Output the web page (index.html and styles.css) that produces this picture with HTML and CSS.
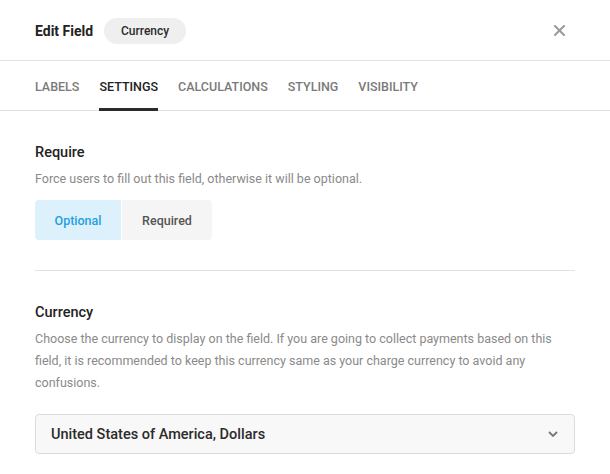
FILE: index.html
```html
<!DOCTYPE html>
<html>
<head>
<meta charset="utf-8">
<link rel="stylesheet" href="styles.css">
</head>
<body>
<div class="panel">
  <header class="header">
    <div class="title-group">
      <h1 class="title">Edit Field</h1>
      <span class="pill">Currency</span>
    </div>
    <button class="close" aria-label="Close">
      <svg width="11" height="11" viewBox="0 0 11 11"><path d="M1 1L10 10M10 1L1 10" stroke="#9a9a9a" stroke-width="2" stroke-linecap="square"/></svg>
    </button>
  </header>
  <nav class="tabs">
    <span class="tab">LABELS</span>
    <span class="tab active">SETTINGS</span>
    <span class="tab">CALCULATIONS</span>
    <span class="tab">STYLING</span>
    <span class="tab">VISIBILITY</span>
  </nav>
  <main class="content">
    <section class="section">
      <h2 class="section-title">Require</h2>
      <p class="desc">Force users to fill out this field, otherwise it will be optional.</p>
      <div class="toggle">
        <span class="toggle-opt selected">Optional</span>
        <span class="toggle-opt">Required</span>
      </div>
    </section>
    <hr class="divider">
    <section class="section">
      <h2 class="section-title">Currency</h2>
      <p class="desc">Choose the currency to display on the field. If you are going to collect payments based on this field, it is recommended to keep this currency same as your charge currency to avoid any confusions.</p>
      <div class="select">
        <span class="select-value">United States of America, Dollars</span>
        <svg class="chev" width="10" height="6" viewBox="0 0 10 6"><path d="M1 1L5 5L9 1" fill="none" stroke="#777" stroke-width="1.8"/></svg>
      </div>
    </section>
  </main>
</div>
</body>
</html>
```
FILE: styles.css
```css
* { box-sizing: border-box; }
html, body {
  margin: 0;
  padding: 0;
  background: #fff;
  font-family: Roboto, "Liberation Sans", sans-serif;
  color: #2b2b2b;
}
.panel { width: 610px; }
.header {
  height: 61px;
  padding: 0 35px;
  display: flex;
  align-items: center;
  justify-content: space-between;
  border-bottom: 1px solid #e2e2e2;
}
.title-group { display: flex; align-items: center; gap: 11px; padding-top: 1px; }
.title {
  margin: 0;
  font-size: 14px;
  font-weight: 700;
  color: #222;
}
.pill {
  display: inline-flex;
  align-items: center;
  justify-content: center;
  width: 82px;
  height: 26px;
  border-radius: 13px;
  background: #efefef;
  font-size: 12px;
  font-weight: 500;
  color: #2b2b2b;
}
.close {
  border: 0;
  background: none;
  padding: 0;
  margin-right: 10px;
  display: flex;
  cursor: pointer;
}
.tabs {
  height: 50px;
  padding: 0 35px;
  display: flex;
  gap: 20px;
  border-bottom: 1px solid #e2e2e2;
}
.tab {
  position: relative;
  display: flex;
  align-items: center;
  padding-top: 1px;
  font-size: 12.5px;
  font-weight: 500;
  color: #7a7a7a;
}
.tab.active { color: #222; }
.tab.active::after {
  content: "";
  position: absolute;
  left: 0;
  right: 0;
  bottom: -1px;
  height: 3px;
  background: #2b2b2b;
}
.content { padding: 31px 35px 0; }
.section-title {
  margin: 0;
  padding-top: 1px;
  font-size: 14.5px;
  line-height: 20px;
  font-weight: 500;
  color: #222;
}
.desc {
  margin: 5px 0 0;
  font-size: 12.5px;
  line-height: 22px;
  color: #8a8a8a;
}
.toggle {
  margin-top: 10px;
  display: flex;
  gap: 1px;
}
.toggle-opt {
  height: 40px;
  display: flex;
  align-items: center;
  justify-content: center;
  font-size: 12.5px;
  font-weight: 500;
  background: #f5f5f5;
  color: #555;
  width: 90px;
  border-radius: 0 4px 4px 0;
}
.toggle-opt.selected {
  width: 86px;
  background: #dcf1fc;
  color: #1fa0e0;
  border-radius: 4px 0 0 4px;
}
.divider {
  margin: 30px 0 0;
  border: 0;
  border-top: 1px solid #e2e2e2;
}
.divider + .section { padding-top: 31px; }
.select {
  margin-top: 20px;
  height: 40px;
  display: flex;
  align-items: center;
  justify-content: space-between;
  padding: 0 16px 0 15px;
  background: #f8f8f8;
  border: 1px solid #dcdcdc;
  border-radius: 4px;
}
.select-value {
  font-size: 14.5px;
  font-weight: 500;
  color: #2b2b2b;
}
```
